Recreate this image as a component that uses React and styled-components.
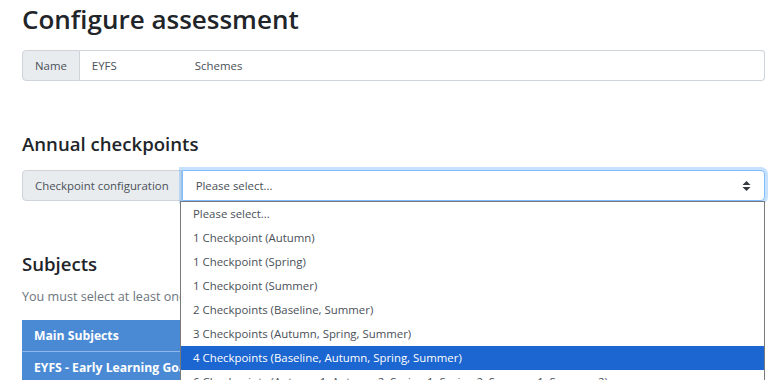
import React from 'react';
import styled, {createGlobalStyle} from 'styled-components';

const GlobalStyle = createGlobalStyle`
  body {
    margin: 0;
    background: #fff;
    color: #212529;
    font-family: "Open Sans", "Noto Sans", sans-serif;
    overflow: hidden;
  }
`;

const Page = styled.div`
  width: 771px;
  height: 380px;
  padding: 0 6px 0 22px;
  box-sizing: border-box;
  overflow: hidden;
`;

const Title = styled.h1`
  margin: 0;
  padding-top: 1px;
  font-size: 26px;
  font-weight: 600;
  line-height: 36px;
`;

const Heading = styled.h2`
  margin: 0;
  font-size: 18.6px;
  font-weight: 600;
  line-height: 26px;
  margin-top: ${p => p.$top}px;
`;

const InputGroup = styled.div`
  display: flex;
  height: 31px;
  margin-top: ${p => p.$top}px;
  font-size: 11.4px;
  position: relative;
`;

const Addon = styled.div`
  display: flex;
  align-items: center;
  padding: 0 12px;
  background: #e9ecef;
  color: #495057;
  border: 1px solid #ced4da;
  border-radius: 4px 0 0 4px;
  white-space: nowrap;
`;

const Field = styled.div`
  flex: 1;
  display: flex;
  align-items: center;
  padding: 0 12px;
  border: 1px solid #ced4da;
  border-left: none;
  border-radius: 0 4px 4px 0;
  color: #495057;
`;

const Value = styled.span`
  width: ${p => p.$width || 'auto'};
`;

const Select = styled.div`
  flex: 1;
  display: flex;
  align-items: center;
  justify-content: space-between;
  padding: 0 13px;
  border: 1px solid #80bdff;
  border-radius: 0 4px 4px 0;
  box-shadow: 0 0 0 3px rgba(0, 123, 255, 0.22);
  color: #495057;
  background: #fff;
`;

const Options = styled.ul`
  position: absolute;
  top: 31px;
  left: 158px;
  right: 0;
  margin: 0;
  padding: 0;
  list-style: none;
  background: #fff;
  border: 1px solid #7a7a7a;
  border-bottom: none;
  z-index: 2;
`;

const Option = styled.li`
  height: 24px;
  line-height: 24px;
  padding: 0 12px;
  color: ${p => (p.$active ? '#fff' : '#495057')};
  background: ${p => (p.$active ? '#1b66d0' : '#fff')};
  white-space: nowrap;
`;

const Hint = styled.p`
  margin: 10px 0 0;
  font-size: 12.6px;
  line-height: 20px;
  color: #6c757d;
`;

const Table = styled.div`
  margin-top: 13px;
`;

const Row = styled.div`
  height: 31px;
  display: flex;
  align-items: center;
  padding: 0 12px;
  background: #4a8ad5;
  border-bottom: 1px solid #8fb6e6;
  color: #fff;
  font-size: 12.2px;
  font-weight: 700;
`;

const Arrows = () => (
  <svg width="9" height="12" viewBox="0 0 9 12">
    <path d="M4.5 1 L8.5 5 H0.5 Z" fill="#343a40" />
    <path d="M4.5 11 L8.5 7 H0.5 Z" fill="#343a40" />
  </svg>
);

const options = [
  'Please select...',
  '1 Checkpoint (Autumn)',
  '1 Checkpoint (Spring)',
  '1 Checkpoint (Summer)',
  '2 Checkpoints (Baseline, Summer)',
  '3 Checkpoints (Autumn, Spring, Summer)',
  '4 Checkpoints (Baseline, Autumn, Spring, Summer)',
  '6 Checkpoints (Autumn 1, Autumn 2, Spring 1, Spring 2, Summer 1, Summer 2)',
];

const App = () => (
  <Page>
    <GlobalStyle />
    <Title>Configure assessment</Title>
    <InputGroup $top={13}>
      <Addon>Name</Addon>
      <Field>
        <Value $width="103px">EYFS</Value>
        <Value>Schemes</Value>
      </Field>
    </InputGroup>

    <Heading $top={50}>Annual checkpoints</Heading>
    <InputGroup $top={13}>
      <Addon>Checkpoint configuration</Addon>
      <Select>
        <span>Please select...</span>
        <Arrows />
      </Select>
      <Options>
        {options.map((o, i) => (
          <Option key={o} $active={i === 6}>
            {o}
          </Option>
        ))}
      </Options>
    </InputGroup>

    <Heading $top={50}>Subjects</Heading>
    <Hint>You must select at least one subject.</Hint>
    <Table>
      <Row>Main Subjects</Row>
      <Row>EYFS - Early Learning Goals</Row>
    </Table>
  </Page>
);

export default App;
